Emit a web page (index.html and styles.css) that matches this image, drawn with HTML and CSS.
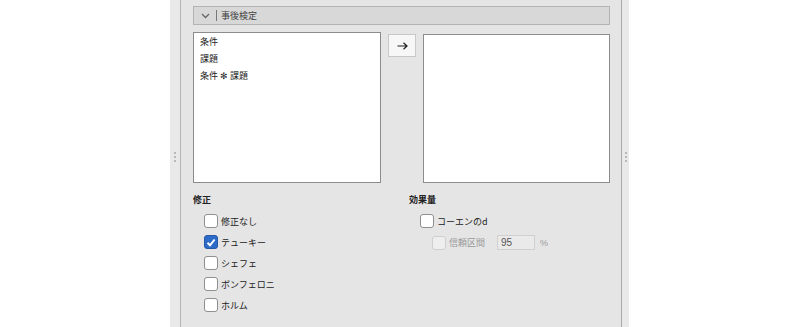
FILE: index.html
```html
<!DOCTYPE html>
<html lang="ja">
<head>
<meta charset="utf-8">
<link rel="stylesheet" href="styles.css">
</head>
<body>
<div class="frame">
  <div class="strip strip-left"><span class="grip"></span></div>
  <div class="panel">
    <div class="section-header">
      <svg class="chev" width="9" height="6" viewBox="0 0 9 6"><path d="M1 1 L4.5 4.5 L8 1" fill="none" stroke="#666" stroke-width="1.3"/></svg>
      <span class="sep"></span>
      <span class="title">事後検定</span>
    </div>
    <div class="lists">
      <div class="listbox left-list">
        <div class="item">条件</div>
        <div class="item">課題</div>
        <div class="item">条件 ✻ 課題</div>
      </div>
      <div class="arrow-btn">
        <svg width="11" height="8" viewBox="0 0 11 8"><path d="M0.5 4 H10 M6.5 0.8 L10 4 L6.5 7.2" fill="none" stroke="#222" stroke-width="1.2"/></svg>
      </div>
      <div class="listbox right-list"></div>
    </div>
    <div class="options">
      <div class="group group-left">
        <div class="group-title">修正</div>
        <label class="check"><span class="box"></span>修正なし</label>
        <label class="check"><span class="box checked"><svg width="10" height="9" viewBox="0 0 10 9"><path d="M1.5 4.8 L4 7.3 L8.6 1.5" fill="none" stroke="#fff" stroke-width="2"/></svg></span>テューキー</label>
        <label class="check"><span class="box"></span>シェフェ</label>
        <label class="check"><span class="box"></span>ボンフェロニ</label>
        <label class="check"><span class="box"></span>ホルム</label>
      </div>
      <div class="group group-right">
        <div class="group-title">効果量</div>
        <label class="check"><span class="box"></span>コーエンのd</label>
        <div class="ci-row">
          <span class="box disabled"></span><span class="dim">信頼区間</span>
          <span class="num">95</span><span class="dim pct">%</span>
        </div>
      </div>
    </div>
  </div>
  <div class="strip strip-right"><span class="grip"></span></div>
</div>
</body>
</html>
```
FILE: styles.css
```css
html, body {
  margin: 0;
  padding: 0;
  background: #ffffff;
  font-family: "Noto Sans CJK JP", "Noto Sans", sans-serif;
  font-size: 9px;
  color: #222;
}
.frame {
  display: flex;
  margin-left: 170px;
  width: 459px;
  height: 327px;
  background: #e5e5e5;
}
.strip {
  background: #e9e9e9;
  display: flex;
  align-items: center;
  justify-content: center;
}
.strip-left {
  width: 10px;
  border-right: 1px solid #b5b5b5;
}
.strip-right {
  width: 7px;
  border-left: 1px solid #a9a9a9;
}
.grip {
  width: 2px;
  height: 10px;
  background: repeating-linear-gradient(to bottom, #b8b8b8 0 2px, transparent 2px 4px);
  position: relative;
  top: -7px;
}
.panel {
  width: 417px;
  padding: 6px 11px 0 12px;
}
.section-header {
  height: 17px;
  border: 1px solid #b3b3b3;
  background: #d8d8d8;
  display: flex;
  align-items: center;
}
.chev {
  margin-left: 7px;
}
.sep {
  width: 1px;
  height: 11px;
  background: #777;
  margin-left: 6px;
  margin-right: 4px;
}
.title {
  color: #444;
  font-size: 9px;
}
.lists {
  display: flex;
  margin-top: 7px;
  height: 151px;
}
.listbox {
  background: #fff;
  border: 1px solid #8c8c8c;
  box-sizing: border-box;
}
.left-list {
  width: 188px;
  height: 151px;
}
.item {
  height: 17px;
  line-height: 17px;
  padding-left: 6px;
}
.arrow-btn {
  width: 28px;
  height: 23px;
  box-sizing: border-box;
  margin: 2px 7px 0 7px;
  background: #f7f7f7;
  border: 1px solid #c8c8c8;
  display: flex;
  align-items: center;
  justify-content: center;
}
.right-list {
  width: 187px;
  height: 149px;
  margin-top: 2px;
}
.options {
  display: flex;
  margin-top: 10px;
}
.group {
  flex-shrink: 0;
}
.group-left {
  width: 216px;
}
.group-right {
  width: 200px;
}
.group-title {
  font-weight: bold;
  height: 14px;
  line-height: 14px;
  margin-bottom: 7px;
}
.check {
  display: flex;
  align-items: center;
  height: 14px;
  margin-bottom: 7px;
  margin-left: 11px;
}
.box {
  width: 14px;
  height: 14px;
  box-sizing: border-box;
  border: 1px solid #8f8f8f;
  border-radius: 3px;
  background: #fff;
  margin-right: 3px;
  display: inline-flex;
  align-items: center;
  justify-content: center;
}
.box.checked {
  background: #2d6bc9;
  border-color: #2659a8;
}
.box.disabled {
  background: #eeeeee;
  border-color: #cfcfcf;
}
.ci-row {
  display: flex;
  align-items: center;
  height: 15px;
  margin-left: 23px;
}
.dim {
  color: #9a9a9a;
}
.num {
  width: 38px;
  height: 15px;
  box-sizing: border-box;
  border: 1px solid #d0d0d0;
  background: #eaeaea;
  color: #555;
  padding-left: 3px;
  line-height: 13px;
  margin-left: 12px;
  font-family: "Liberation Sans", sans-serif;
  font-size: 10px;
}
.pct {
  margin-left: 5px;
  font-family: "Liberation Sans", sans-serif;
}
```
